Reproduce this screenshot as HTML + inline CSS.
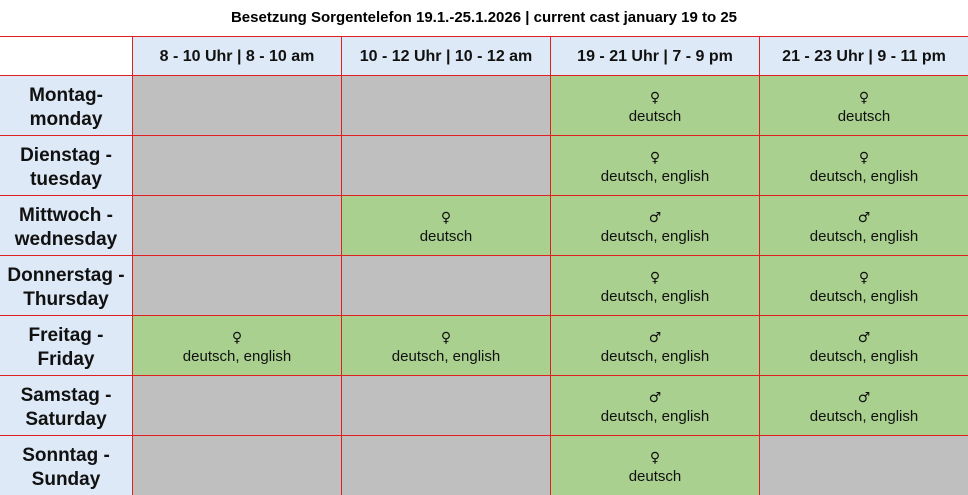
<!DOCTYPE html><html><head><style>
body{margin:0;width:968px;height:495px;overflow:hidden;background:#fff;font-family:"Liberation Sans","DejaVu Sans",sans-serif;position:relative}
.t{position:absolute;top:9px;left:0;width:968px;text-align:center;font-weight:bold;font-size:15px;color:#000}
.bg{position:absolute;left:0;top:36px;width:968px;height:459px;background:#e02020}
.c{position:absolute;box-sizing:border-box;display:flex;flex-direction:column;align-items:center;justify-content:center;text-align:center;color:#111;font-size:15px;line-height:20px}
.w{background:#fff}
.h{background:#dde9f6;font-weight:bold;font-size:16px;padding-top:2px}
.d{background:#dde9f6;font-weight:bold;font-size:19px;line-height:24px;padding-top:4px}
.g{background:#bfbfbf}.n{background:#a9d08e;padding-top:5px}
.s{font-family:"DejaVu Sans",sans-serif;font-size:14px;line-height:18px}
</style></head><body>
<div class="t">Besetzung Sorgentelefon 19.1.-25.1.2026 | current cast january 19 to 25</div>
<div class="bg"></div>
<div id="g"></div>
<script>
var X=[0,132,341,550,759,968],Y=[36,75,135,195,255,315,375,435,495];
var H=["","8 - 10 Uhr | 8 - 10 am","10 - 12 Uhr | 10 - 12 am","19 - 21 Uhr | 7 - 9 pm","21 - 23 Uhr | 9 - 11 pm"];
var D=["Montag-<br>monday","Dienstag -<br>tuesday","Mittwoch -<br>wednesday","Donnerstag -<br>Thursday","Freitag -<br>Friday","Samstag -<br>Saturday","Sonntag -<br>Sunday"];
var F="♀",M="♂",de="deutsch",de2="deutsch, english";
var C=[[0,0,[F,de],[F,de]],[0,0,[F,de2],[F,de2]],[0,[F,de],[M,de2],[M,de2]],[0,0,[F,de2],[F,de2]],[[F,de2],[F,de2],[M,de2],[M,de2]],[0,0,[M,de2],[M,de2]],[0,0,[F,de],0]];
var h="";
function cell(x0,y0,x1,y1,cls,html){var l=x0?x0+1:0;h+='<div class="c '+cls+'" style="left:'+l+'px;top:'+(y0+1)+'px;width:'+(x1-l)+'px;height:'+(y1-y0-1)+'px">'+html+'</div>';}
for(var i=0;i<5;i++)cell(X[i],Y[0],X[i+1],Y[1],i?"h":"w",H[i]);
for(var r=0;r<7;r++){cell(X[0],Y[r+1],X[1],Y[r+2],"d",D[r]);for(var c=0;c<4;c++){var v=C[r][c];cell(X[c+1],Y[r+1],X[c+2],Y[r+2],v?"n":"g",v?'<span class="s">'+v[0]+'</span><span>'+v[1]+'</span>':"");}}
document.getElementById("g").innerHTML=h;
</script>
</body></html>
